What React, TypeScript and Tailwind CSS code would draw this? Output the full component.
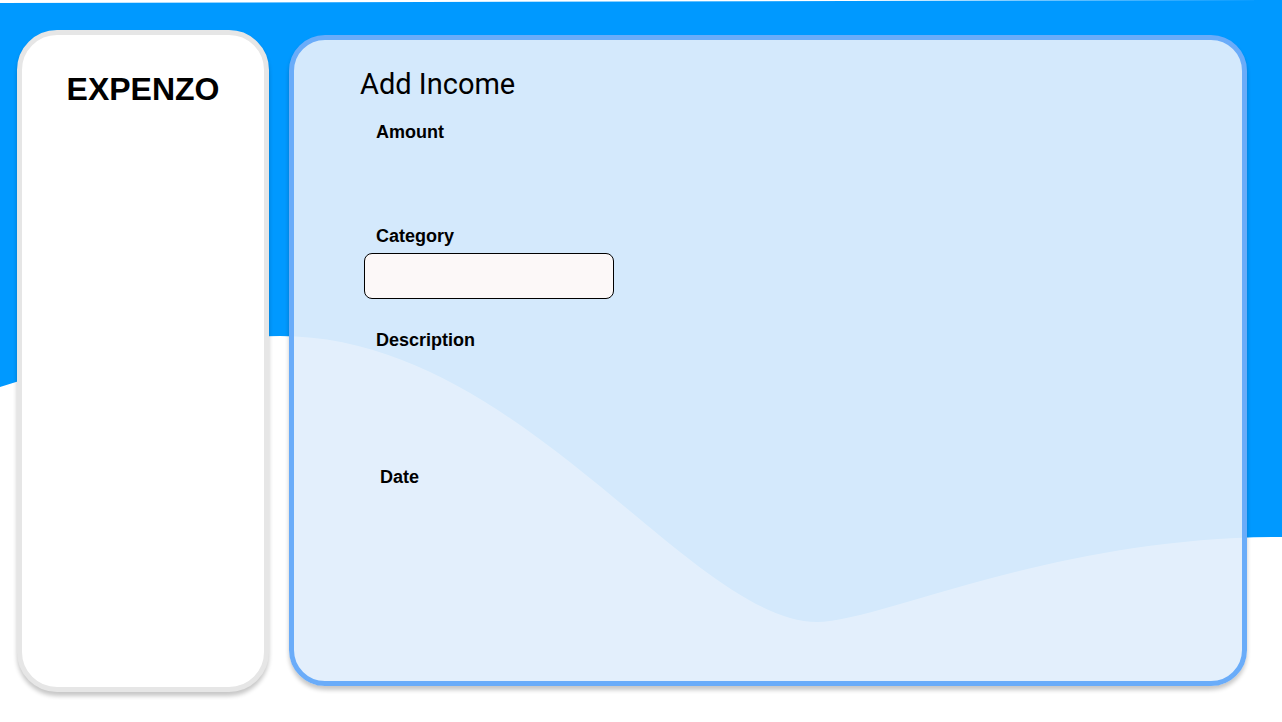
import React from "react";

function Wave() {
  return (
    <svg
      className="absolute inset-0 h-full w-full"
      viewBox="0 0 1282 722"
      preserveAspectRatio="none"
      aria-hidden="true"
    >
      <path
        d="M0,3 L1282,0 L1282,537 C1050,537 880,622 817,622 C688,620 520,336 280,336 C200,336 100,356 0,387 Z"
        fill="#0099ff"
      />
    </svg>
  );
}

function Field({ label, className }: { label: string; className?: string }) {
  return (
    <div
      className={
        "text-[18px] font-bold leading-none text-black " + (className ?? "")
      }
      style={{ fontFamily: '"Liberation Sans", Arial, sans-serif' }}
    >
      {label}
    </div>
  );
}

export default function App() {
  return (
    <div className="relative h-[722px] w-[1282px] overflow-hidden bg-white">
      <Wave />
      <div className="relative z-10 flex items-start gap-[20px] pl-[17px]">
        <aside className="mt-[30px] flex h-[662px] w-[252px] flex-col items-center rounded-[40px] border-[5px] border-[#e6e6e6] bg-white pt-[38px] shadow-[0_4px_4px_rgba(0,0,0,0.22)]">
          <div
            className="text-[32px] font-bold leading-none text-black"
            style={{ fontFamily: '"Liberation Sans", Arial, sans-serif' }}
          >
            EXPENZO
          </div>
        </aside>
        <main className="mt-[35px] flex h-[651px] w-[958px] flex-col items-start rounded-[36px] border-[5px] border-[#6aacf9] bg-[rgba(225,238,252,0.94)] pl-[66px] pt-[30px] shadow-[0_4px_4px_rgba(0,0,0,0.22)]">
          <h1
            className="text-[29px] font-normal leading-none text-black"
            style={{ fontFamily: "Roboto, sans-serif" }}
          >
            Add Income
          </h1>
          <Field label="Amount" className="ml-[16px] mt-[24px]" />
          <Field label="Category" className="ml-[16px] mt-[86px]" />
          <div className="ml-[4px] mt-[8px] h-[46px] w-[250px] rounded-[8px] border border-black bg-[#fcf8f8]" />
          <Field label="Description" className="ml-[16px] mt-[32px]" />
          <Field label="Date" className="ml-[20px] mt-[119px]" />
        </main>
      </div>
    </div>
  );
}
